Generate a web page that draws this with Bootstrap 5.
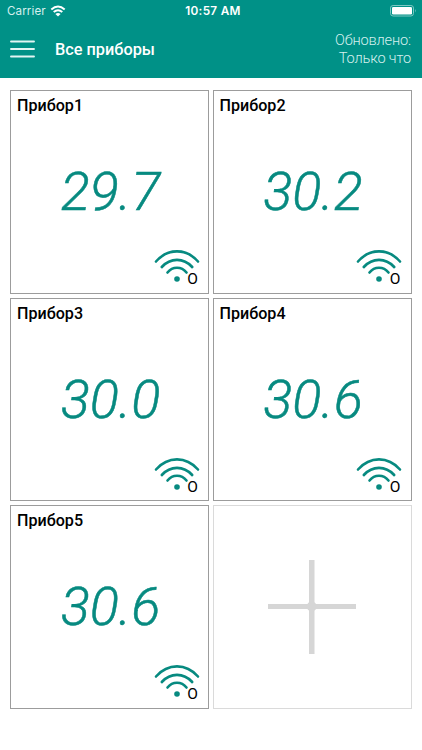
<!DOCTYPE html>
<html lang="ru">
<head>
<meta charset="utf-8">
<meta name="viewport" content="width=device-width, initial-scale=1">
<title>Все приборы</title>
<link href="https://cdn.jsdelivr.net/npm/bootstrap@5.3.0/dist/css/bootstrap.min.css" rel="stylesheet">
<style>
body { font-family: Roboto, sans-serif; color: #000; background: #fff; width: 422px; height: 750px; overflow: hidden; }
.app-top { background: #009187; height: 77.5px; color: #fff; }
.status-bar { height: 22px; padding: 0 5px 0 7px; font: 11.6px/22px Inter, sans-serif; }
.status-bar > div { flex: 1 1 0; }
.carrier { letter-spacing: .1px; color: #d5f0ee; }
.clock { font-weight: 600; font-size: 11.8px; letter-spacing: .3px; padding-left: 2px; }
.title-bar { height: 54px; padding: 0 11px 0 10px; }
.app-title { font-size: 16.3px; font-weight: 500; line-height: 20px; margin-left: 20px; padding-top: 1px; }
.updated { font-size: 14.6px; font-weight: 300; line-height: 18px; color: #d5f0ee; letter-spacing: -.15px; }
.device-grid { display: grid; grid-template-columns: 199px 199px; grid-auto-rows: 203.6px; gap: 4px 3.5px; padding: 12.5px 10px; }
.device { border: 1px solid #9c9c9c; padding: 5px 5px 5px 6px; }
.device-name { font-size: 16.1px; font-weight: 500; line-height: 20px; }
.reading { color: #078a80; font-size: 54px; font-style: italic; font-weight: 300; line-height: 54px; margin-top: 49px; padding-left: 1px; -webkit-text-stroke: .5px #078a80; }
.signal { padding-right: 5px; margin-top: 30px; height: 38px; }
.signal-mark { font-size: 15.5px; line-height: 18px; margin-left: -12.5px; margin-top: 21px; }
.add-device { border: 1px solid #dadada; }
</style>
</head>
<body>
<header class="app-top">
  <div class="status-bar d-flex align-items-center">
    <div class="carrier d-flex align-items-center">Carrier
      <svg class="ms-1" width="16" height="12" viewBox="0 0 16 12" fill="none" stroke="#fff" stroke-width="2"><path d="M1.3 4.4Q8-1.3 14.7 4.4M3.7 7Q8 3.4 12.3 7"/><path d="M5.4 8.9Q8 7 10.6 8.9L8 11.4Z" fill="#fff" stroke="none"/></svg>
    </div>
    <div class="clock text-center text-nowrap">10:57 AM</div>
    <div class="d-flex justify-content-end">
      <svg width="27" height="12" viewBox="0 0 27 12"><rect x=".5" y=".5" width="23" height="10.5" rx="2.6" fill="none" stroke="#7cc8c3"/><rect x="2" y="2" width="20" height="7.5" rx="1.3" fill="#fff"/><path d="M25 4Q26.5 5.8 25 7.6Z" fill="#7cc8c3"/></svg>
    </div>
  </div>
  <div class="title-bar d-flex align-items-center">
    <svg width="25" height="20" viewBox="0 0 25 20" stroke="#e2f5f3" stroke-width="1.9" stroke-linecap="round"><path d="M1 2.5H24M1 10H24M1 17.5H24"/></svg>
    <h1 class="app-title mb-0">Все приборы</h1>
    <div class="updated ms-auto text-end">Обновлено:<br>Только что</div>
  </div>
</header>
<svg class="d-none">
  <symbol id="wifi" viewBox="0 0 46 34"><g fill="none" stroke="#078a80" stroke-width="2.6" stroke-linecap="round"><path d="M2 12.5C14-1 32-1 44 12.5M7.8 18C16.5 8.5 29.5 8.5 38.2 18M13.5 23.5C18.5 17.2 27.5 17.2 32.5 23.5"/></g><circle cx="23" cy="30" r="2.8" fill="#078a80"/></symbol>
</svg>
<main class="device-grid">
  <section class="device"><div class="device-name">Прибор1</div><div class="reading text-center">29.7</div><div class="signal d-flex justify-content-end align-items-start"><svg width="46" height="34"><use href="#wifi"/></svg><span class="signal-mark">O</span></div></section>
  <section class="device"><div class="device-name">Прибор2</div><div class="reading text-center">30.2</div><div class="signal d-flex justify-content-end align-items-start"><svg width="46" height="34"><use href="#wifi"/></svg><span class="signal-mark">O</span></div></section>
  <section class="device"><div class="device-name">Прибор3</div><div class="reading text-center">30.0</div><div class="signal d-flex justify-content-end align-items-start"><svg width="46" height="34"><use href="#wifi"/></svg><span class="signal-mark">O</span></div></section>
  <section class="device"><div class="device-name">Прибор4</div><div class="reading text-center">30.6</div><div class="signal d-flex justify-content-end align-items-start"><svg width="46" height="34"><use href="#wifi"/></svg><span class="signal-mark">O</span></div></section>
  <section class="device"><div class="device-name">Прибор5</div><div class="reading text-center">30.6</div><div class="signal d-flex justify-content-end align-items-start"><svg width="46" height="34"><use href="#wifi"/></svg><span class="signal-mark">O</span></div></section>
  <section class="add-device d-flex justify-content-center align-items-center">
    <svg width="88" height="94" viewBox="0 0 88 94" fill="#d6d6d6"><path d="M41 0H46.5V94H41ZM0 44H88V49H0Z"/><circle cx="43.7" cy="46.5" r="5"/></svg>
  </section>
</main>
<script src="https://cdn.jsdelivr.net/npm/bootstrap@5.3.0/dist/js/bootstrap.bundle.min.js"></script>
</body>
</html>
